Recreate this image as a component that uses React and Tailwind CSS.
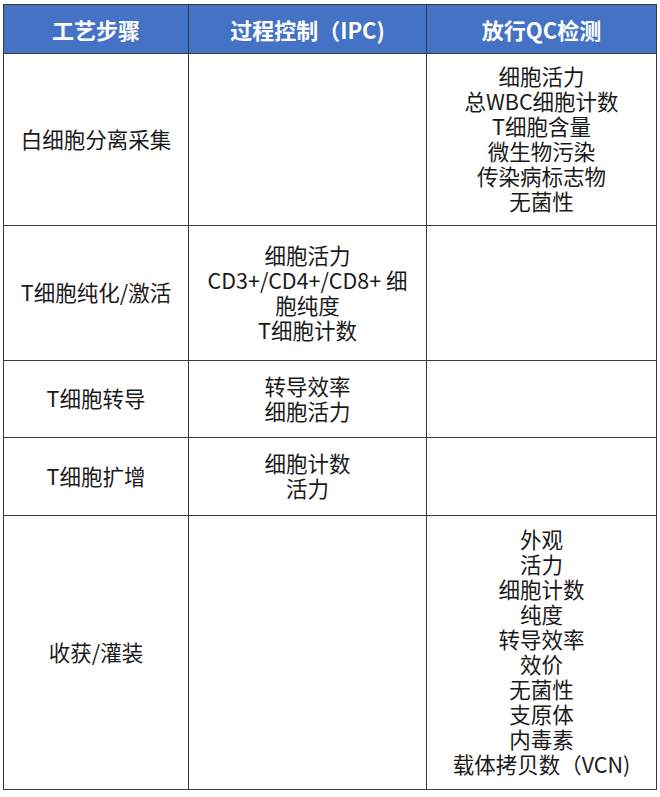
const rows = [
  {
    step: "白细胞分离采集",
    ipc: [],
    qc: ["细胞活力", "总WBC细胞计数", "T细胞含量", "微生物污染", "传染病标志物", "无菌性"],
    h: "h-[172px]",
  },
  {
    step: "T细胞纯化/激活",
    ipc: ["细胞活力", "CD3+/CD4+/CD8+ 细", "胞纯度", "T细胞计数"],
    qc: [],
    h: "h-[135px]",
  },
  {
    step: "T细胞转导",
    ipc: ["转导效率", "细胞活力"],
    qc: [],
    h: "h-[77px]",
  },
  {
    step: "T细胞扩增",
    ipc: ["细胞计数", "活力"],
    qc: [],
    h: "h-[78px]",
  },
  {
    step: "收获/灌装",
    ipc: [],
    qc: ["外观", "活力", "细胞计数", "纯度", "转导效率", "效价", "无菌性", "支原体", "内毒素", "载体拷贝数（VCN)"],
    h: "h-[274px]",
  },
];

function Lines({ items }) {
  return items.map((t, i) => (
    <div key={i} className="whitespace-nowrap">
      {t}
    </div>
  ));
}

export default function App() {
  return (
    <div className="w-[660px] h-[797px] bg-white pl-[3px] pt-[4px] font-['Noto_Sans_CJK_SC','Noto_Sans',sans-serif]">
      <table className="w-[653px] table-fixed border-collapse text-[21.5px] leading-[25px] text-[#1a1a1a]">
        <colgroup>
          <col className="w-[185px]" />
          <col className="w-[238px]" />
          <col className="w-[230px]" />
        </colgroup>
        <thead>
          <tr className="h-[49px] bg-[#4472c4] text-white">
            <th className="border border-[#3a3a3a] font-bold text-[22px]">工艺步骤</th>
            <th className="border border-[#3a3a3a] font-bold text-[22px]">过程控制（IPC)</th>
            <th className="border border-[#3a3a3a] font-bold text-[22px]">放行QC检测</th>
          </tr>
        </thead>
        <tbody>
          {rows.map((r, i) => (
            <tr key={i} className={r.h}>
              <td className="border border-[#3a3a3a] text-center align-middle pb-[3px]">{r.step}</td>
              <td className="border border-[#3a3a3a] text-center align-middle pb-[3px]">
                <Lines items={r.ipc} />
              </td>
              <td className="border border-[#3a3a3a] text-center align-middle pb-[3px]">
                <Lines items={r.qc} />
              </td>
            </tr>
          ))}
        </tbody>
      </table>
    </div>
  );
}
